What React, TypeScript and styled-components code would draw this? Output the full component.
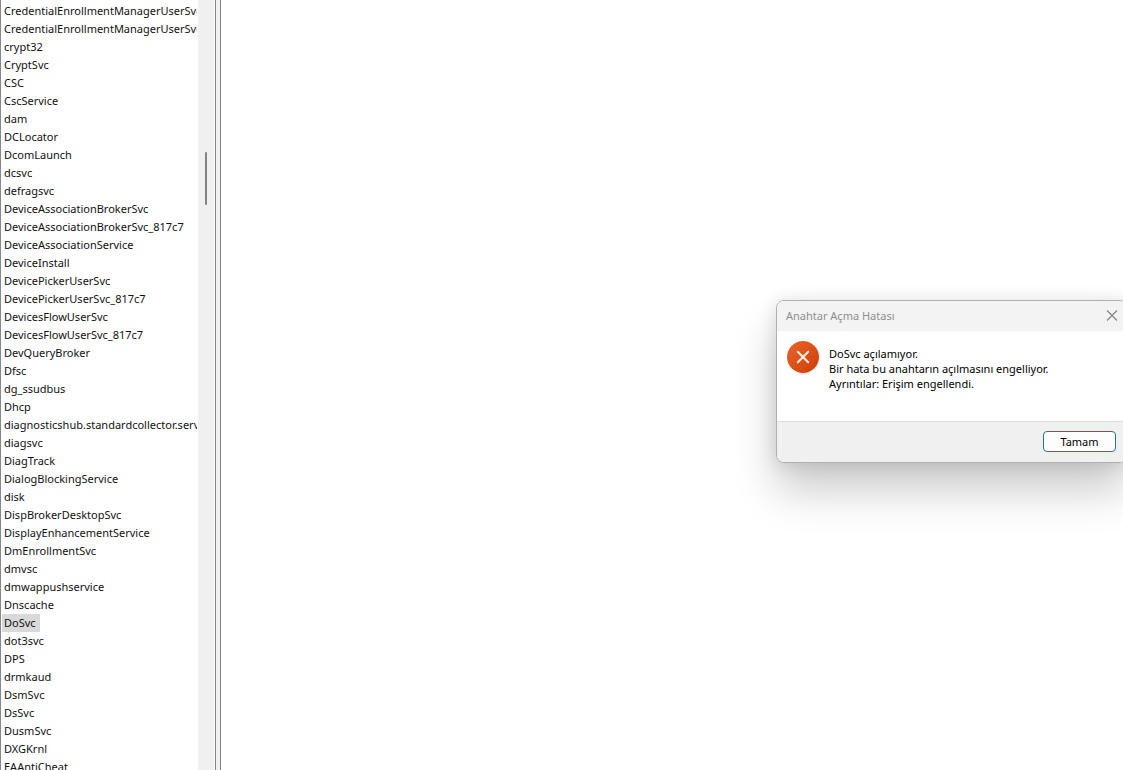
import React from 'react';
import styled, { createGlobalStyle } from 'styled-components';

const GlobalStyle = createGlobalStyle`
  * { box-sizing: border-box; }
  body {
    margin: 0;
    background: #fff;
    color: #111;
    font-family: "Noto Sans", "Open Sans", sans-serif;
    font-size: 11px;
    line-height: 18px;
  }
`;

const Window = styled.div`
  position: relative;
  display: flex;
  height: 100vh;
  overflow: hidden;
`;

const TreePane = styled.nav`
  display: flex;
  flex: 0 0 216px;
  min-width: 0;
  border-left: 1px solid #828790;
  border-right: 1px solid #828282;
`;

const KeyList = styled.ul`
  flex: 1;
  min-width: 0;
  margin: 0;
  padding: 2px 1px 0 1px;
  list-style: none;
  overflow: hidden;
`;

const KeyRow = styled.li`
  display: flex;
  height: 18px;
  overflow: hidden;
`;

const KeyLabel = styled.span<{ $selected: boolean }>`
  padding: 0 4px 0 2px;
  white-space: nowrap;
  background: ${(p) => (p.$selected ? '#d9d9d9' : 'transparent')};
`;

const ScrollTrack = styled.div`
  flex: 0 0 17px;
  padding: 152px 7px 0;
  background: #f0f0f0;
  border-right: 1px solid #fff;
`;

const ScrollThumb = styled.div`
  height: 53px;
  border-radius: 1px;
  background: #858585;
`;

const Splitter = styled.div`
  flex: 0 0 5px;
  background: #f0f0f0;
  border-right: 1px solid #828282;
`;

const ValuePane = styled.main`
  flex: 1;
  background: #fff;
`;

const Dialog = styled.section`
  position: absolute;
  top: 300px;
  right: -5px;
  width: 352px;
  border: 1px solid #b0b0b0;
  border-radius: 8px;
  background: #fff;
  box-shadow: 0 28px 44px rgba(0, 0, 0, 0.2), 0 2px 18px rgba(0, 0, 0, 0.12);
`;

const TitleBar = styled.header`
  display: flex;
  align-items: center;
  justify-content: space-between;
  height: 30px;
  padding: 0 9px;
  border-radius: 7px 7px 0 0;
  background: #f3f3f3;
`;

const Title = styled.h1`
  margin: 0;
  font-size: 11px;
  font-weight: 400;
  color: #8f8f8f;
`;

const CloseButton = styled.button`
  display: flex;
  padding: 0;
  border: 0;
  background: none;
  color: #858585;
`;

const DialogBody = styled.div`
  display: flex;
  gap: 10px;
  height: 90px;
  padding: 10px;
`;

const Message = styled.p`
  margin: 0;
  padding-top: 5px;
  line-height: 15px;
  color: #000;
`;

const DialogFooter = styled.footer`
  display: flex;
  justify-content: flex-end;
  padding: 9px 11px 10px;
  border-top: 1px solid #dfdfdf;
  border-radius: 0 0 7px 7px;
  background: #f0f0f0;
`;

const OkButton = styled.button`
  width: 73px;
  height: 21px;
  padding: 0;
  border: 1px solid #1f74a8;
  border-radius: 4px;
  background: #fdfdfd;
  color: #000;
  font: inherit;
  line-height: 18px;
`;

const SELECTED_KEY = 'DoSvc';

const KEYS = [
  'CredentialEnrollmentManagerUserSvc',
  'CredentialEnrollmentManagerUserSvc_817c7',
  'crypt32', 'CryptSvc', 'CSC', 'CscService', 'dam', 'DCLocator', 'DcomLaunch', 'dcsvc',
  'defragsvc', 'DeviceAssociationBrokerSvc', 'DeviceAssociationBrokerSvc_817c7',
  'DeviceAssociationService', 'DeviceInstall', 'DevicePickerUserSvc',
  'DevicePickerUserSvc_817c7', 'DevicesFlowUserSvc', 'DevicesFlowUserSvc_817c7',
  'DevQueryBroker', 'Dfsc', 'dg_ssudbus', 'Dhcp',
  'diagnosticshub.standardcollector.service', 'diagsvc', 'DiagTrack',
  'DialogBlockingService', 'disk', 'DispBrokerDesktopSvc', 'DisplayEnhancementService',
  'DmEnrollmentSvc', 'dmvsc', 'dmwappushservice', 'Dnscache', 'DoSvc', 'dot3svc', 'DPS',
  'drmkaud', 'DsmSvc', 'DsSvc', 'DusmSvc', 'DXGKrnl', 'EAAntiCheat',
];

function ErrorIcon() {
  return (
    <svg width="32" height="32" viewBox="0 0 32 32" aria-hidden="true">
      <defs>
        <linearGradient id="error-fill" x1="0" y1="0" x2="1" y2="1">
          <stop offset="0" stopColor="#e8662c" />
          <stop offset="1" stopColor="#d23c06" />
        </linearGradient>
      </defs>
      <circle cx="16" cy="16" r="16" fill="url(#error-fill)" />
      <path d="M10.8 10.8 21.2 21.2M21.2 10.8 10.8 21.2" stroke="#fff3ea" strokeWidth="2" strokeLinecap="round" />
    </svg>
  );
}

export default function App() {
  return (
    <>
      <GlobalStyle />
      <Window>
        <TreePane>
          <KeyList>
            {KEYS.map((key) => (
              <KeyRow key={key}>
                <KeyLabel $selected={key === SELECTED_KEY}>{key}</KeyLabel>
              </KeyRow>
            ))}
          </KeyList>
          <ScrollTrack>
            <ScrollThumb />
          </ScrollTrack>
        </TreePane>
        <Splitter />
        <ValuePane />
        <Dialog role="alertdialog" aria-labelledby="dialog-title" aria-describedby="dialog-message">
          <TitleBar>
            <Title id="dialog-title">Anahtar Açma Hatası</Title>
            <CloseButton type="button" aria-label="Kapat">
              <svg width="12" height="12" viewBox="0 0 12 12" aria-hidden="true">
                <path d="M1 .5 11 10.5M11 .5 1 10.5" stroke="currentColor" strokeWidth="1.1" />
              </svg>
            </CloseButton>
          </TitleBar>
          <DialogBody>
            <ErrorIcon />
            <Message id="dialog-message">
              DoSvc açılamıyor.
              <br />
              Bir hata bu anahtarın açılmasını engelliyor.
              <br />
              Ayrıntılar: Erişim engellendi.
            </Message>
          </DialogBody>
          <DialogFooter>
            <OkButton type="button">Tamam</OkButton>
          </DialogFooter>
        </Dialog>
      </Window>
    </>
  );
}
